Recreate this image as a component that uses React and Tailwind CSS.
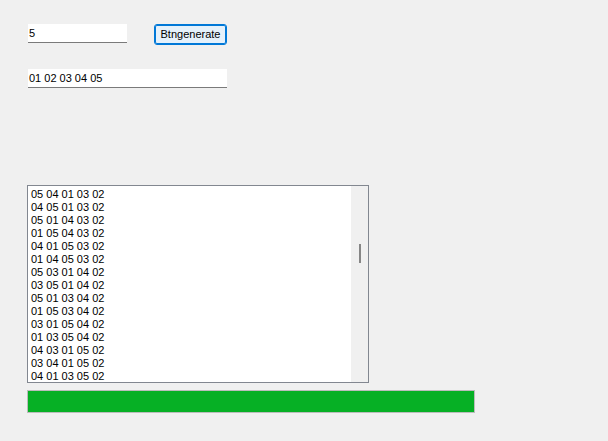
const rows = [
  "05 04 01 03 02",
  "04 05 01 03 02",
  "05 01 04 03 02",
  "01 05 04 03 02",
  "04 01 05 03 02",
  "01 04 05 03 02",
  "05 03 01 04 02",
  "03 05 01 04 02",
  "05 01 03 04 02",
  "01 05 03 04 02",
  "03 01 05 04 02",
  "01 03 05 04 02",
  "04 03 01 05 02",
  "03 04 01 05 02",
  "04 01 03 05 02",
];

const font = { fontFamily: '"Liberation Sans", Arial, sans-serif' };

export default function App() {
  return (
    <div
      className="flex h-[441px] w-[608px] flex-col items-start bg-[#f0f0f0] pl-[27px] pt-[24px] text-[11px] text-black"
      style={font}
    >
      <div className="flex items-start">
        <div className="ml-px flex h-[19px] w-[99px] items-center border-b border-[#7a7a7a] bg-white pl-[1px]">
          5
        </div>
        <button className="ml-[27px] flex h-[21px] w-[73px] items-center justify-center rounded-[3px] border border-[#0078d7] bg-[#e5f1fb] text-[11px] leading-none shadow-[inset_0_0_0_1px_#0078d7]">
          Btngenerate
        </button>
      </div>

      <div className="ml-px mt-[24px] flex h-[19px] w-[199px] items-center border-b border-[#7a7a7a] bg-white pl-[1px]">
        01 02 03 04 05
      </div>

      <div className="mt-[97px] flex h-[198px] w-[342px] border border-[#828790] bg-white">
        <div className="flex-1 pl-[3px] pt-[2px]">
          {rows.map((r) => (
            <div key={r} className="h-[13px] leading-[13px]">
              {r}
            </div>
          ))}
        </div>
        <div className="flex w-[17px] justify-center bg-[#f0f0f0] pt-[58px]">
          <div className="h-[19px] w-[2px] bg-[#868686]" />
        </div>
      </div>

      <div className="mt-[7px] h-[23px] w-[448px] border border-[#bcbcbc] bg-[#e6e6e6]">
        <div className="h-full w-full bg-[#06b025]" />
      </div>
    </div>
  );
}
